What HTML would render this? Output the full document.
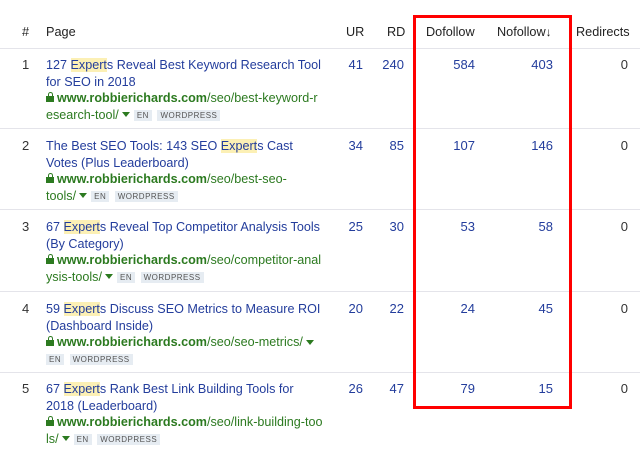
<!DOCTYPE html>
<html><head><style>
*{margin:0;padding:0;box-sizing:border-box}
body{width:640px;height:452px;background:#fff;font-family:"Liberation Sans",Arial,sans-serif;font-size:13px;color:#333;position:relative;overflow:hidden}
.h{position:absolute;top:25px;font-weight:normal;color:#222;font-size:12.7px}
.hr{position:absolute;left:0;width:640px;height:1px;background:#e4e4ea}
.row{position:absolute;left:0;width:640px;height:81px}
.n{position:absolute;left:22px;top:9px;line-height:16px}
.p{position:absolute;left:46px;top:9px;line-height:16.5px;color:#233d9c;white-space:nowrap;font-size:12.6px}
.g{color:#2c7a20}
.g b{font-weight:bold}
.hl{background:#fcf0b5}
.num{position:absolute;top:9px;line-height:16px;text-align:right;color:#233d9c}
.z{color:#333}
.tag{display:inline-block;background:#e6ecf2;color:#555;font-size:8px;line-height:11px;padding:0 3px;letter-spacing:.5px;vertical-align:1px;margin-left:2px}
.lock{display:inline-block;width:8px;height:6px;background:#2c7a20;position:relative;margin-right:3px;vertical-align:0}
.lock:before{content:"";position:absolute;left:1.5px;top:-4px;width:5px;height:5px;border:1.5px solid #2c7a20;border-bottom:none;border-radius:3px 3px 0 0;box-sizing:border-box}
.tri{display:inline-block;width:0;height:0;border-left:4px solid transparent;border-right:4px solid transparent;border-top:5px solid #2c7a20;margin:0 2px 1px 3px;vertical-align:middle}
.box{position:absolute;left:413px;top:15px;width:159px;height:394px;border:3px solid #f00}
</style></head><body>
<div class="h" style="left:22px">#</div>
<div class="h" style="left:46px">Page</div>
<div class="h" style="left:346px">UR</div>
<div class="h" style="left:387px">RD</div>
<div class="h" style="left:426px">Dofollow</div>
<div class="h" style="left:497px">Nofollow<span style="font-size:12px;font-weight:bold">&#8595;</span></div>
<div class="h" style="left:576px">Redirects</div>
<div class="hr" style="top:48px"></div>

<div class="row" style="top:48px">
<div class="n">1</div>
<div class="p">127 <span class="hl">Expert</span>s Reveal Best Keyword Research Tool<br>for SEO in 2018<br><span class="g"><span class="lock"></span><b>www.robbierichards.com</b>/seo/best-keyword-r<br>esearch-tool/<span class="tri"></span></span><span class="tag">EN</span> <span class="tag">WORDPRESS</span></div>
<div class="num" style="right:277px">41</div><div class="num" style="right:236px">240</div><div class="num" style="right:165px">584</div><div class="num" style="right:87px">403</div><div class="num z" style="right:12px">0</div>
</div>
<div class="hr" style="top:128px"></div>

<div class="row" style="top:129px">
<div class="n">2</div>
<div class="p">The Best SEO Tools: 143 SEO <span class="hl">Expert</span>s Cast<br>Votes (Plus Leaderboard)<br><span class="g"><span class="lock"></span><b>www.robbierichards.com</b>/seo/best-seo-<br>tools/<span class="tri"></span></span><span class="tag">EN</span> <span class="tag">WORDPRESS</span></div>
<div class="num" style="right:277px">34</div><div class="num" style="right:236px">85</div><div class="num" style="right:165px">107</div><div class="num" style="right:87px">146</div><div class="num z" style="right:12px">0</div>
</div>
<div class="hr" style="top:209px"></div>

<div class="row" style="top:210px">
<div class="n">3</div>
<div class="p">67 <span class="hl">Expert</span>s Reveal Top Competitor Analysis Tools<br>(By Category)<br><span class="g"><span class="lock"></span><b>www.robbierichards.com</b>/seo/competitor-anal<br>ysis-tools/<span class="tri"></span></span><span class="tag">EN</span> <span class="tag">WORDPRESS</span></div>
<div class="num" style="right:277px">25</div><div class="num" style="right:236px">30</div><div class="num" style="right:165px">53</div><div class="num" style="right:87px">58</div><div class="num z" style="right:12px">0</div>
</div>
<div class="hr" style="top:291px"></div>

<div class="row" style="top:292px">
<div class="n">4</div>
<div class="p">59 <span class="hl">Expert</span>s Discuss SEO Metrics to Measure ROI<br>(Dashboard Inside)<br><span class="g"><span class="lock"></span><b>www.robbierichards.com</b>/seo/seo-metrics/<span class="tri"></span></span><br><span class="tag" style="margin-left:0">EN</span> <span class="tag">WORDPRESS</span></div>
<div class="num" style="right:277px">20</div><div class="num" style="right:236px">22</div><div class="num" style="right:165px">24</div><div class="num" style="right:87px">45</div><div class="num z" style="right:12px">0</div>
</div>
<div class="hr" style="top:372px"></div>

<div class="row" style="top:372px">
<div class="n">5</div>
<div class="p">67 <span class="hl">Expert</span>s Rank Best Link Building Tools for<br>2018 (Leaderboard)<br><span class="g"><span class="lock"></span><b>www.robbierichards.com</b>/seo/link-building-too<br>ls/<span class="tri"></span></span><span class="tag">EN</span> <span class="tag">WORDPRESS</span></div>
<div class="num" style="right:277px">26</div><div class="num" style="right:236px">47</div><div class="num" style="right:165px">79</div><div class="num" style="right:87px">15</div><div class="num z" style="right:12px">0</div>
</div>

<div class="box"></div>
</body></html>
